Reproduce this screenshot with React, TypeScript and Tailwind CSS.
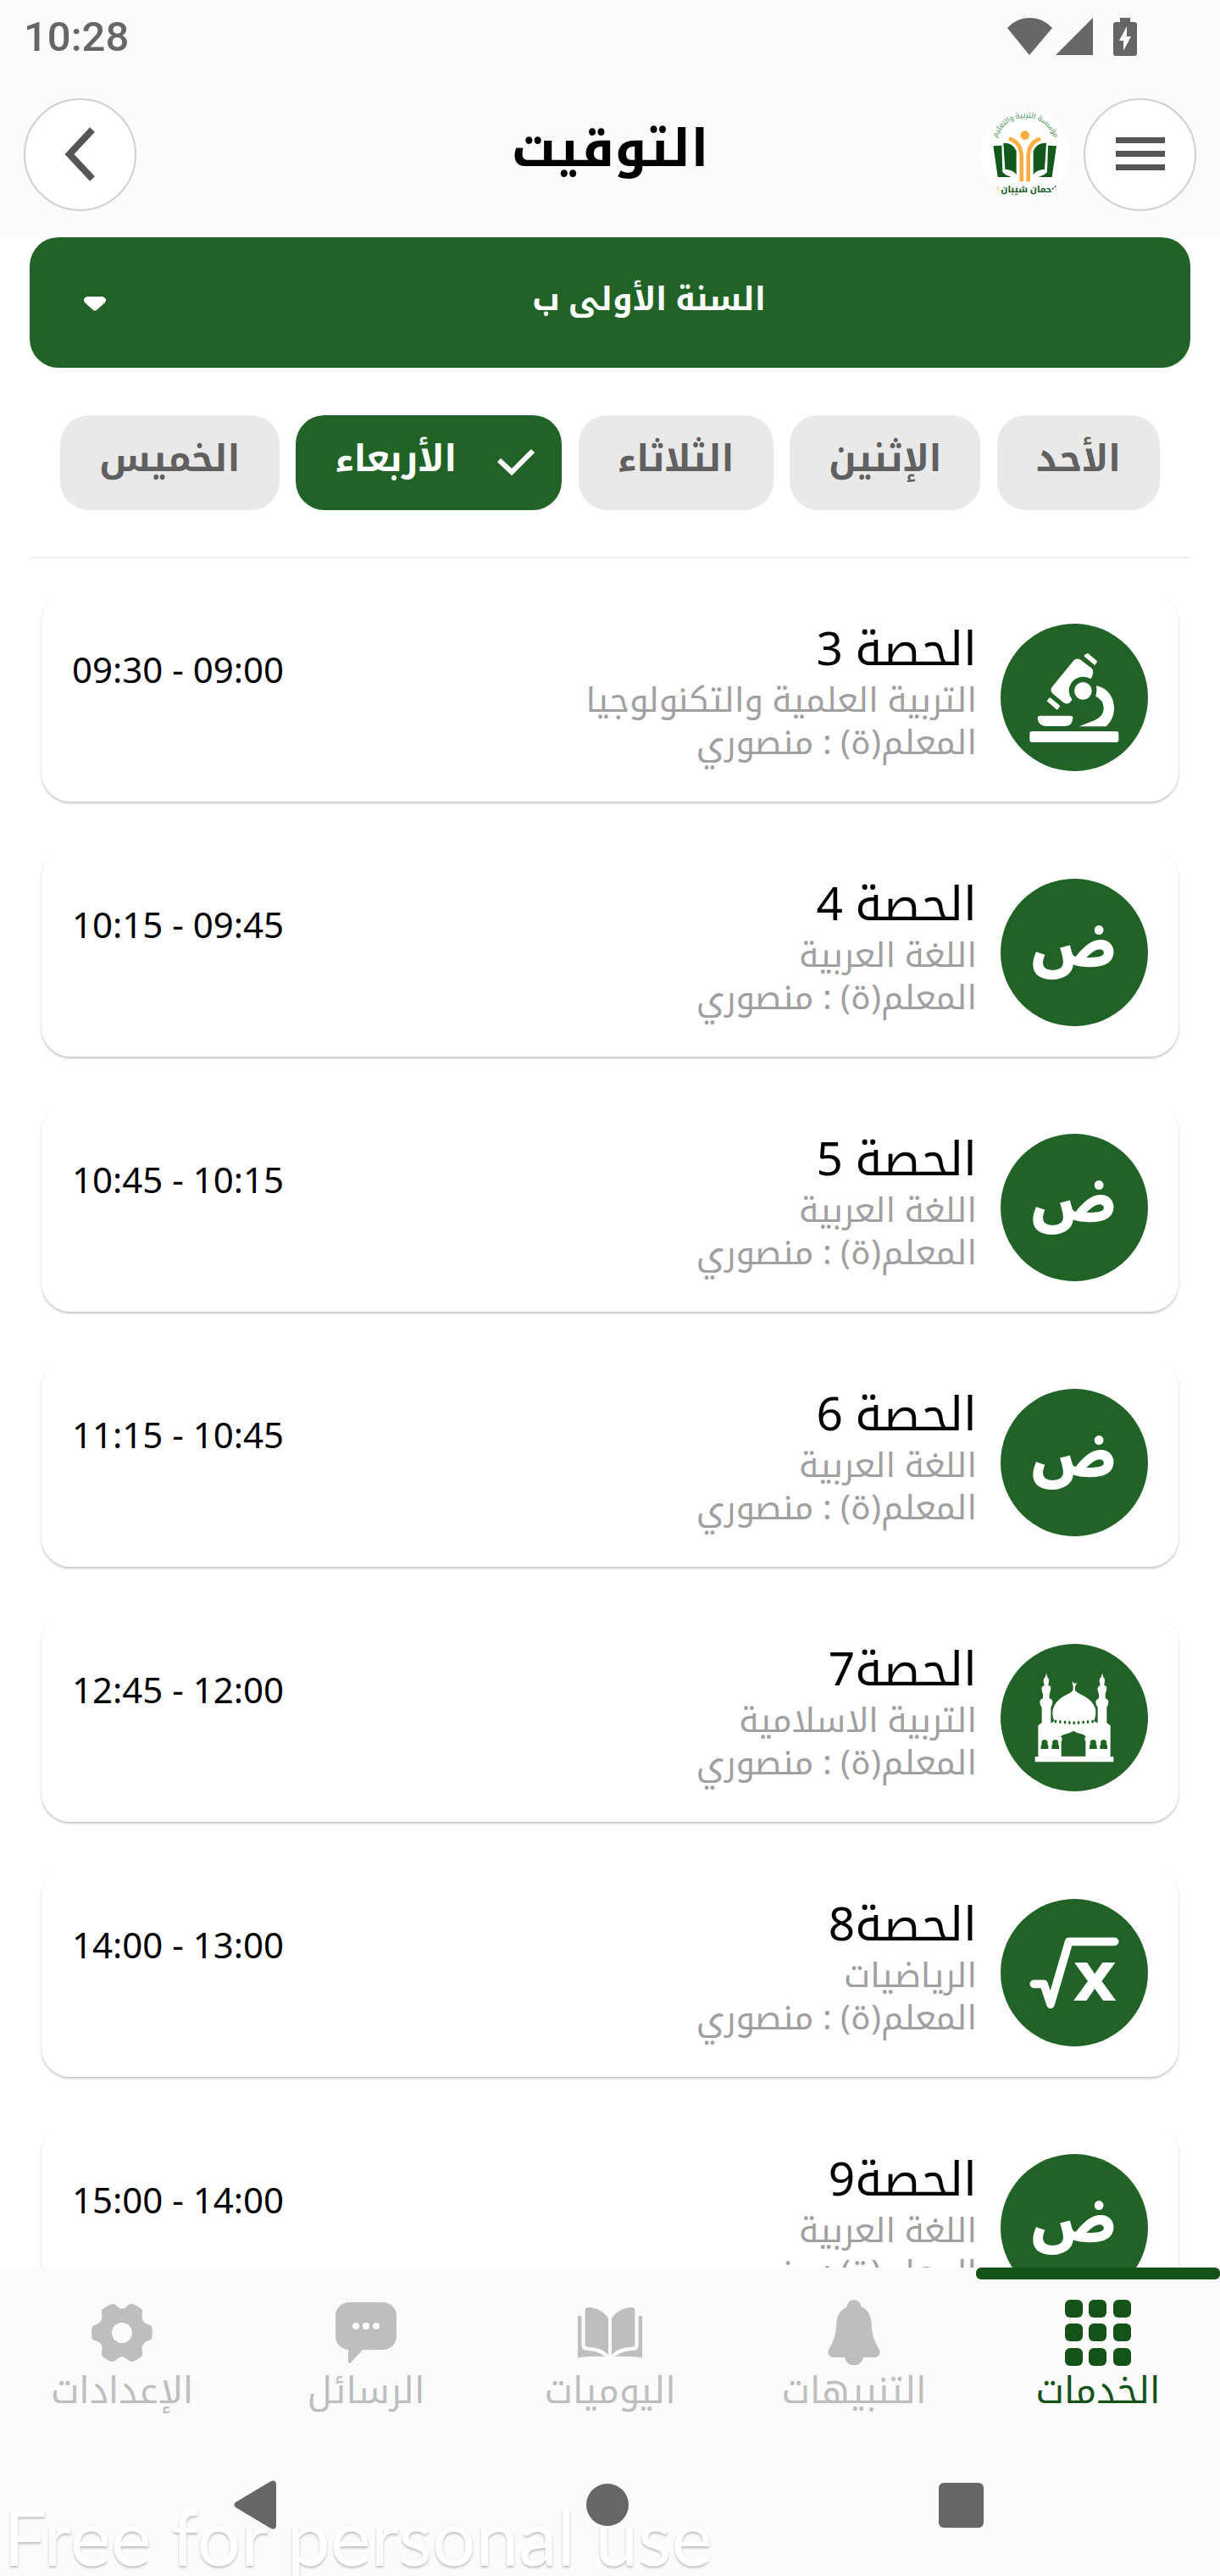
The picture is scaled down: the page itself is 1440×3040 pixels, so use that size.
import React, { useState } from "react";

const days = ["الأحد", "الإثنين", "الثلاثاء", "الأربعاء", "الخميس"];

const lessons = [
  { title: "الحصة 3", subject: "التربية العلمية والتكنولوجيا", time: "09:00 - 09:30", icon: "science" },
  { title: "الحصة 4", subject: "اللغة العربية", time: "09:45 - 10:15", icon: "arabic" },
  { title: "الحصة 5", subject: "اللغة العربية", time: "10:15 - 10:45", icon: "arabic" },
  { title: "الحصة 6", subject: "اللغة العربية", time: "10:45 - 11:15", icon: "arabic" },
  { title: "الحصة7", subject: "التربية الاسلامية", time: "12:00 - 12:45", icon: "islamic" },
  { title: "الحصة8", subject: "الرياضيات", time: "13:00 - 14:00", icon: "math" },
  { title: "الحصة9", subject: "اللغة العربية", time: "14:00 - 15:00", icon: "arabic" },
];

const MicroscopeIcon = () => (
  <svg viewBox="65 45 522 522" className="size-full" fill="white">
    <rect x="168" y="426" width="315" height="39" rx="8" />
    <path d="M196 379Q196 371 204 371H313Q321 371 321 379Q320 408 292 408H224Q197 406 196 379Z" />
    <path d="M404 265C440 271 467 303 467 343C467 370 457 392 439 409H343L400 386Q430 372 430 345Q430 315 402 302Q408 283 404 265Z" />
    <circle cx="357" cy="283" r="31" />
    <path d="M325 174Q336 165 349 173L388 203Q394 210 392 222Q389 236 384 240Q370 233 357 233A50 50 0 0 0 307 283Q308 300 318 312Q318 320 308 326Q298 331 288 325L248 291Q240 282 246 271Z" />
    <path d="M365 159L373 154L403 179L398 187ZM234 318L240 311L271 337L265 345Z" stroke="white" strokeWidth="8" strokeLinejoin="round" />
  </svg>
);

const minaret =
  "M227 162L231 176Q238 182 236 190L234 205Q242 206 243 213Q243 222 238 236V251Q250 256 249 264Q249 272 243 283V345H211V283Q204 275 204 264Q204 255 215 251V236Q209 222 211 213Q213 207 220 205L217 190Q216 180 223 176Z";

const MosqueIcon = () => (
  <svg viewBox="65 58 522 522" className="size-full" fill="white">
    <path d={minaret} />
    <path d={minaret} transform="translate(198 0)" />
    <path d="M325 218Q335 232 350 237Q402 262 402 300Q402 322 392 336H258Q249 322 249 300Q252 260 300 237Q315 232 325 218Z" />
    <path d="M322 224V206Q317 200 321 188Q322 199 328 198Q333 198 334 194Q334 205 329 207V224Z" />
    <path d="M198 347L210 338H244L256 331H395L408 338H441L454 347V457H465V476H187V457H198Z" />
    <g fill="#216326">
      {[260, 276, 293, 309, 325, 341, 358, 374, 391].map((x) => (
        <ellipse key={x} cx={x} cy={338 - Math.abs(x - 325) / 12} rx="4" ry="6" />
      ))}
      <path d="M280 456V402Q287 396 278 386Q285 379 300 376Q315 372 323 366Q332 372 348 376Q362 379 367 386Q359 396 366 402V456Z" />
      {[208, 246, 380, 417].map((x) => (
        <path key={x} d={`M${x} 430V418L${x + 3} 414Q${x - 1} 398 ${x + 13} 397Q${x + 27} 398 ${x + 23} 414L${x + 26} 418V430Z`} />
      ))}
    </g>
  </svg>
);

const RootIcon = () => (
  <svg viewBox="65 61 522 522" className="size-full">
    <path d="M183 362H218L242 434L307 212H469" fill="none" stroke="white" strokeWidth="29" strokeLinecap="round" strokeLinejoin="round" />
    <text x="399" y="420" textAnchor="middle" fill="white" className="font-['DejaVu_Sans'] font-bold text-[244px]" direction="ltr">x</text>
  </svg>
);

const LessonIcon = ({ icon }: { icon: string }) => {
  if (icon === "science") return <MicroscopeIcon />;
  if (icon === "islamic") return <MosqueIcon />;
  if (icon === "math") return <RootIcon />;
  return (
    <span className="pb-2 font-['Noto_Sans_Arabic','DejaVu_Sans',sans-serif] text-[66px] leading-[88px] font-black text-white">ض</span>
  );
};

const ServicesIcon = () => (
  <svg viewBox="0 0 78 78" className="size-[78px]" fill="currentColor">
    {[0, 28, 57].map((y) => [0, 28, 57].map((x) => <rect key={`${x}-${y}`} x={x} y={y} width="21" height="21" rx="6" />))}
  </svg>
);

const BellIcon = () => (
  <svg viewBox="927 42 234 234" className="size-[78px]" fill="currentColor">
    <circle cx="1044" cy="68" r="25" />
    <circle cx="1044" cy="240" r="34" />
    <path d="M1044 62C1010 62 984 85 982 125C981 165 972 188 955 216C948 232 956 246 972 246H1116C1132 246 1141 232 1133 216C1115 188 1107 165 1106 125C1104 85 1078 62 1044 62Z" />
  </svg>
);

const bookHalf =
  "M92 78Q92 69 102 69Q150 70 174 108V237Q150 210 102 209Q92 208 92 198ZM66 103Q66 99 72 99H79V205Q80 222 100 222Q135 222 162 243Q120 240 72 246Q66 247 66 242Z";

const BookIcon = () => (
  <svg viewBox="63 42 234 234" className="size-[78px]" fill="currentColor">
    <path d={bookHalf} />
    <path d={bookHalf} transform="translate(360 0) scale(-1 1)" />
  </svg>
);

const MessageIcon = () => (
  <svg viewBox="909 42 234 234" className="size-[78px]" fill="currentColor">
    <rect x="918" y="51" width="216" height="168" rx="48" />
    <path d="M963 212V262Q963 268 970 266L1017 217Z" />
    <g fill="#fbfbfb">
      <circle cx="990" cy="135" r="12" />
      <circle cx="1026" cy="135" r="12" />
      <circle cx="1062" cy="135" r="12" />
    </g>
  </svg>
);

const GearIcon = () => (
  <svg viewBox="45 42 234 234" className="size-[78px]" fill="currentColor">
    <path
      fillRule="evenodd"
      d="M130 56Q140 58 144 65Q162 82 180 65Q186 56 197 56Q220 63 234 79Q236 86 233 94Q230 122 252 129Q265 131 268 138Q271 160 268 180Q263 187 252 188Q230 196 233 222Q236 233 234 239Q218 255 197 262Q186 260 180 252Q162 235 144 252Q138 260 127 262Q106 255 90 239Q88 233 91 222Q95 196 72 188Q60 187 56 180Q52 160 56 138Q60 131 72 129Q94 122 91 94Q88 86 90 79Q106 63 130 56ZM162 123A36 36 0 1 0 162 195A36 36 0 1 0 162 123Z"
    />
  </svg>
);

const tabs = [
  { label: "الخدمات", Icon: ServicesIcon },
  { label: "التنبيهات", Icon: BellIcon },
  { label: "اليوميات", Icon: BookIcon },
  { label: "الرسائل", Icon: MessageIcon },
  { label: "الإعدادات", Icon: GearIcon },
];

const logoPage = "M64 156L94 154L97 248Q104 258 128 266L80 266ZM100 145Q135 144 146 174V258Q136 240 106 238Z";

const SchoolLogo = () => (
  <svg viewBox="18 26 318 318" className="size-[106px]" role="img" aria-label="مؤسسة التربية والتعليم">
    <circle cx="177" cy="185" r="159" fill="white" />
    <path id="logo-arc" d="M72 142A108 108 0 0 1 284 142" fill="none" />
    <text fill="#4d9455" direction="rtl" className="text-[26px]" textAnchor="middle">
      <textPath href="#logo-arc" startOffset="50%">مؤسسة التربية والتعليم</textPath>
    </text>
    <circle cx="176" cy="118" r="16" fill="#fbae42" />
    <g fill="#14591c">
      <path d={logoPage} />
      <path d={logoPage} transform="translate(352 0) scale(-1 1)" />
    </g>
    <path d="M120 130Q164 142 164 196V282M232 130Q188 142 188 196V282" fill="none" stroke="#fbae42" strokeWidth="14" />
    <text x="181" y="320" fill="#14591c" direction="rtl" textAnchor="middle" className="text-[32px] font-bold">حمان شيبان</text>
    <path d="M74 302Q84 296 82 312" fill="none" stroke="#fbc98a" strokeWidth="4" />
    <path d="M273 310L277 303M282 302L286 296" stroke="#14591c" strokeWidth="4" />
  </svg>
);

const StatusBar = () => (
  <div dir="ltr" className="flex h-[86px] items-center justify-between pr-[98px] pl-7 text-[#666]">
    <span className="font-['Roboto'] text-[49px] leading-none font-medium">10:28</span>
    <div className="flex items-center">
      <svg viewBox="0 0 53 44" className="h-11 w-[53px]" fill="currentColor">
        <path d="M26 44L0 12Q11 0 26 0Q42 0 53 12Z" />
      </svg>
      <svg viewBox="0 0 44 44" className="ml-1 size-11" fill="currentColor">
        <path d="M44 0V44H0Z" />
      </svg>
      <svg viewBox="0 0 28 45" className="ml-6 h-[45px] w-7" fill="currentColor">
        <path d="M8 0H20V5H25Q28 5 28 8V42Q28 45 25 45H3Q0 45 0 42V8Q0 5 3 5H8Z" />
        <path d="M16 10L7 27H12V39L21 22H16Z" fill="#fbfbfb" />
      </svg>
    </div>
  </div>
);

const App = () => {
  const [day, setDay] = useState("الأربعاء");
  const [tab, setTab] = useState("الخدمات");

  return (
    <div dir="rtl" className="relative flex h-screen flex-col overflow-hidden bg-white font-['Noto_Sans','Noto_Kufi_Arabic','DejaVu_Sans',sans-serif]">
      <header className="shrink-0 bg-[#fbfbfb]">
        <StatusBar />
        <div className="grid h-[194px] grid-cols-[1fr_auto_1fr] items-center px-7 pb-0.5">
          <div className="flex items-center gap-4">
            <button aria-label="القائمة" className="flex size-[133px] items-center justify-center rounded-full border-2 border-[#d0d0d0] bg-white">
              <svg viewBox="0 0 58 40" className="h-10 w-[58px]" fill="#555">
                <path d="M0 0H58V7H0ZM0 16H58V23H0ZM0 32H58V39H0Z" />
              </svg>
            </button>
            <SchoolLogo />
          </div>
          <h1 className="pb-[18px] text-[61px] leading-[64px] font-bold text-black">التوقيت</h1>
          <div className="flex justify-end">
            <button aria-label="رجوع" className="flex size-[133px] items-center justify-center rounded-full border-2 border-[#d0d0d0] bg-white">
              <svg viewBox="0 0 38 64" className="h-16 w-[38px]" fill="none" stroke="#555" strokeWidth="8">
                <path d="M33 3L6 32L33 61" />
              </svg>
            </button>
          </div>
        </div>
      </header>

      <main className="min-h-0 flex-1 overflow-hidden px-[35px]">
        {/* Class picker */}
        <div className="relative">
          <select
            aria-label="القسم"
            className="block h-[154px] w-full appearance-none rounded-[34px] bg-[#216326] pb-3 pl-[92px] text-center text-[38px] font-bold text-white [text-align-last:center]"
          >
            <option>السنة الأولى ب</option>
          </select>
          <svg viewBox="0 0 26 17" className="pointer-events-none absolute top-[70px] left-16 h-[17px] w-[26px]" fill="white">
            <path d="M4 0H22Q28 2 25 7L16 15Q13 18 10 15L1 7Q-2 2 4 0Z" />
          </svg>
        </div>

        {/* Days */}
        <div className="flex justify-between border-b-2 border-[#efefef] px-9 pt-14 pb-[55px]">
          {days.map((d) => (
            <button
              key={d}
              onClick={() => setDay(d)}
              className={`flex h-28 items-center rounded-[34px] px-[46px] pb-3 text-[43px] leading-[48px] font-bold ${
                d === day ? "bg-[#216326] text-white" : "bg-[#e9e9e9] text-[#606060]"
              }`}
            >
              {d === day && (
                <svg viewBox="0 0 44 34" className="mt-3 -mr-3.5 ml-12 h-[34px] w-11" fill="none" stroke="white" strokeWidth="6">
                  <path d="M2 14L17 28L42 3" />
                </svg>
              )}
              {d}
            </button>
          ))}
        </div>

        {/* Lessons */}
        <ul className="flex flex-col gap-[55px] px-3.5 pt-[41px]">
          {lessons.map((lesson) => (
            <li
              key={lesson.title}
              className="flex items-start gap-7 rounded-[34px] bg-white p-9 shadow-[0_2px_3px_rgba(0,0,0,0.24)]"
            >
              <div className="flex size-[174px] shrink-0 items-center justify-center rounded-full bg-[#216326]">
                <LessonIcon icon={lesson.icon} />
              </div>
              <div className="flex-1">
                <h2 className="mb-2 text-[55px] leading-[56px] text-black">{lesson.title}</h2>
                <p className="text-[40px] leading-[50px] text-[#a0a0a0]">{lesson.subject}</p>
                <p className="text-[40px] leading-[50px] text-[#a0a0a0]">المعلم(ة) : منصوري</p>
              </div>
              <time className="mt-[30px] text-[42px] leading-[48px] text-black">{lesson.time}</time>
            </li>
          ))}
        </ul>
      </main>

      <nav className="flex shrink-0 bg-[#fbfbfb]">
        {tabs.map(({ label, Icon }) => (
          <button
            key={label}
            onClick={() => setTab(label)}
            className={`flex flex-1 flex-col items-center ${label === tab ? "text-[#145218]" : "text-[#bebebe]"}`}
          >
            <span className={`mb-6 h-3.5 w-full rounded-md ${label === tab ? "bg-[#145218]" : ""}`} />
            <Icon />
            <span className="text-[43px] leading-[56px]">{label}</span>
          </button>
        ))}
      </nav>

      {/* System buttons */}
      <div dir="ltr" className="flex h-48 shrink-0 items-center justify-between bg-[#fbfbfb] pt-6 pr-[279px] pl-[276px]">
        <button aria-label="Back">
          <svg viewBox="0 0 50 58" className="h-[58px] w-[50px]" fill="#666">
            <path d="M44 1Q50 -1 50 5V53Q50 59 44 57L2 32Q-1 29 2 26Z" />
          </svg>
        </button>
        <button aria-label="Home" className="size-[50px] rounded-full bg-[#666]" />
        <button aria-label="Recent" className="size-[53px] rounded-md bg-[#666]" />
      </div>

      <p dir="ltr" className="pointer-events-none absolute bottom-0.5 left-1 font-['Lato'] text-[91px] leading-none text-white [text-shadow:0_2px_3px_rgba(0,0,0,0.25)]">
        Free for personal use
      </p>
    </div>
  );
};

export default App;
